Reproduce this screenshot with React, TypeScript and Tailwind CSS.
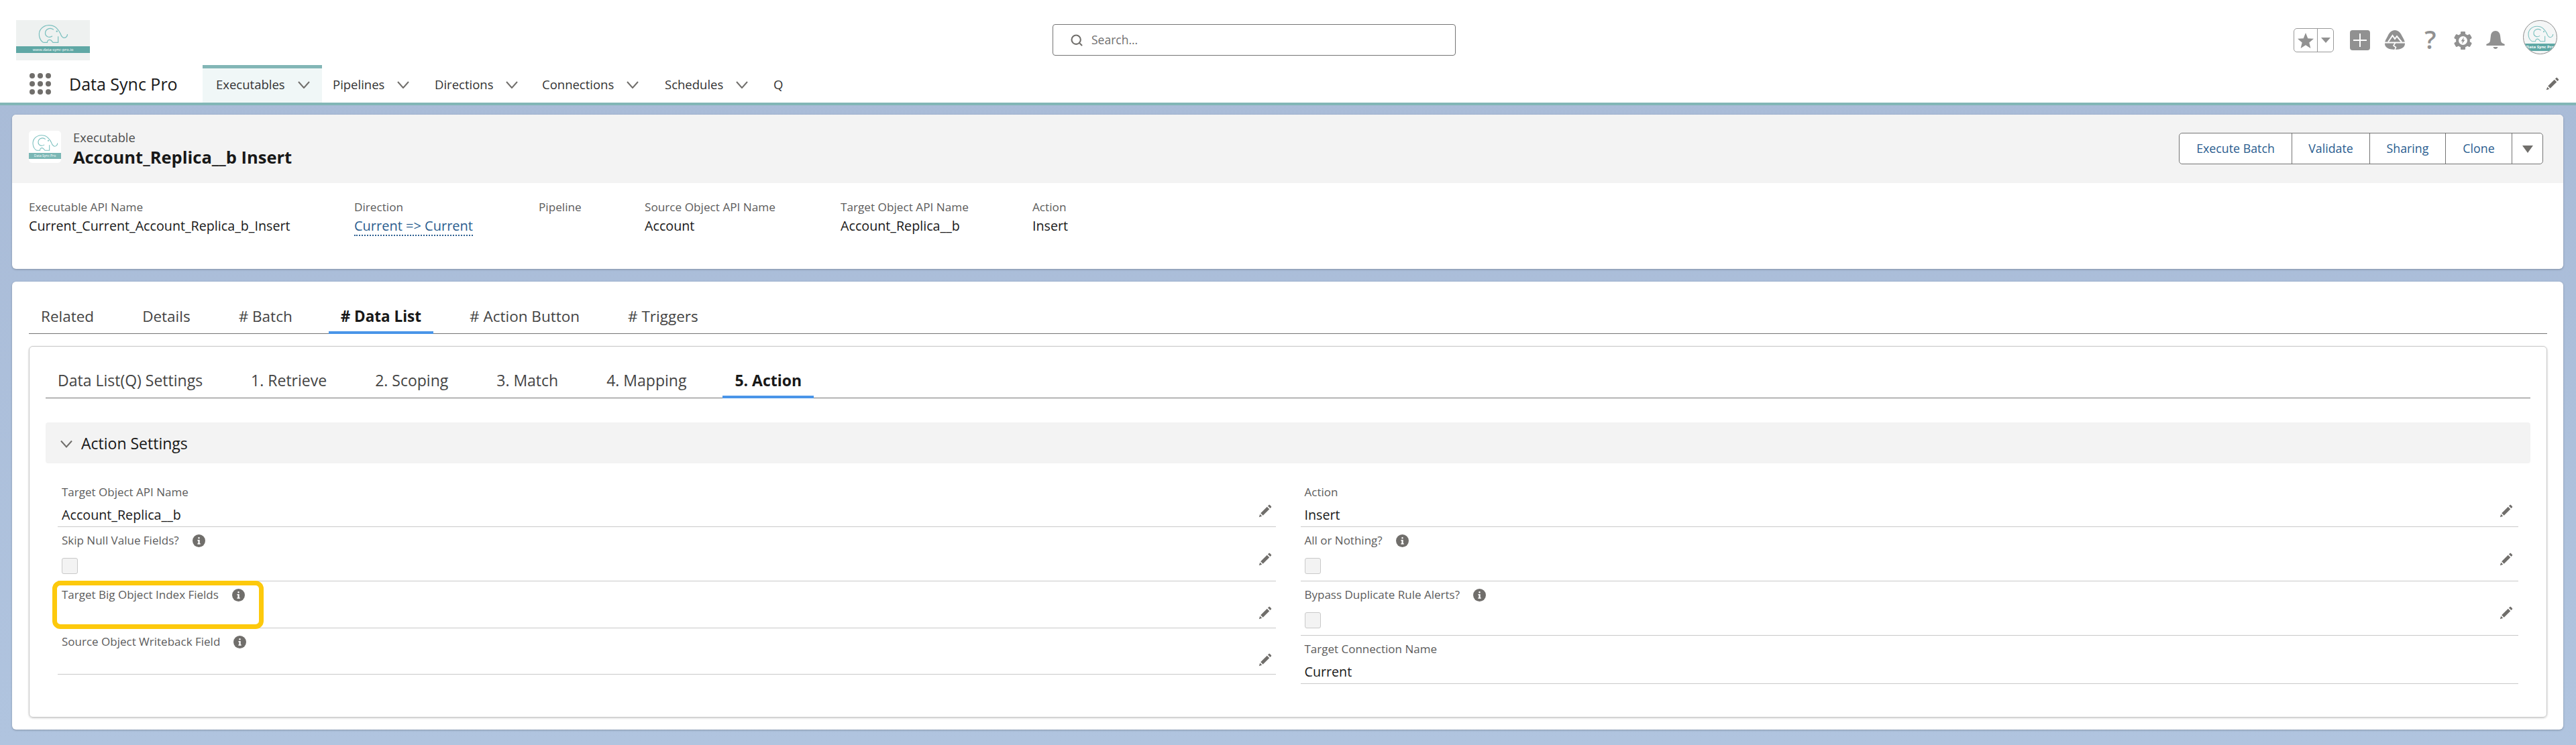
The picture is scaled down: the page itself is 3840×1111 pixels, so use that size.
import { Search } from "lucide-react";

const font = "font-['Open_Sans',_'Noto_Sans',_sans-serif]";

function Elephant({ className }: { className: string }) {
  return (
    <svg className={className} viewBox="0 0 48 30" fill="none" stroke="#7cc0bf" strokeWidth="1.3">
      <path d="M9 28.5C2 24 0 13 6 6.500C12 0 23 0 29 5.500C32 8.500 34 11 35.500 14.500C37 20 41 23 44.500 20C46 18.500 46.500 17 46.500 15.500" />
      <path d="M9 28.500L15 28.500C15 25 18 23 21 25L24 28.500L32 28.500L32 19" />
      <path d="M25 8.500C19 4 12 8 12 14C12 19 18 22 23 18.500" />
      <circle cx="30" cy="11" r="0.6" fill="#7cc0bf" />
    </svg>
  );
}

function Chevron({ className }: { className: string }) {
  return (
    <svg className={className} viewBox="0 0 18 11" fill="none" stroke="#706e6b" strokeWidth="2">
      <path d="M1 1L9 10L17 1" />
    </svg>
  );
}

function Pencil({ className }: { className: string }) {
  return (
    <svg className={className} viewBox="0 0 24 24" fill="#706e6b">
      <path d="M1 23L2.600 17.600L6.400 21.400Z" />
      <path d="M3.800 16L15.300 4.500L19.500 8.700L8 20.200Z" />
      <path d="M16.700 3.100L18.400 1.400C19 .800 19.900 .800 20.500 1.400L22.600 3.500C23.200 4.100 23.200 5 22.600 5.600L20.900 7.300Z" />
    </svg>
  );
}

function Info() {
  return (
    <svg className="w-[19px] h-[19px] shrink-0" viewBox="0 0 19 19">
      <circle cx="9.500" cy="9.500" r="9.500" fill="#706e6b" />
      <rect x="8.300" y="4" width="2.400" height="2.400" rx="1" fill="#fff" />
      <path d="M7.400 8H10.700V13.200H11.700V14.800H7.400V13.200H8.400V9.500H7.400Z" fill="#fff" />
    </svg>
  );
}

function Trailhead() {
  return (
    <svg className="w-[30px] h-[29px]" viewBox="0 0 30 29" fill="#919191">
      <path d="M15 0C20 0 23.500 4 25.500 8.500C27.500 12.500 30 15.500 30 20C30 26 24 29 15 29C6 29 0 26 0 20C0 15.500 2.500 12.500 4.500 8.500C6.500 4 10 0 15 0Z" />
      <path d="M0 18.500H30" stroke="#fff" strokeWidth="2" />
      <path d="M5 17.500L11.500 8L15 13L18 9L25 17.500" stroke="#fff" strokeWidth="2" fill="none" />
      <path d="M15.500 19L13 23L16.500 25.500L15 29" stroke="#fff" strokeWidth="1.600" fill="none" />
    </svg>
  );
}

function Gear() {
  return (
    <svg className="w-[27px] h-[27px]" viewBox="0 0 27 27" fill="#919191">
      {[0, 60, 120, 180, 240, 300].map((deg) => (
        <rect key={deg} x="10" y="0" width="7" height="27" rx="1.500" transform={`rotate(${deg} 13.500 13.500)`} />
      ))}
      <circle cx="13.500" cy="13.500" r="10.500" />
      <circle cx="13.500" cy="13.500" r="6.500" fill="#fff" />
      <path d="M15 8.500L10.500 14.500H13L12 18.500L16.500 12.500H14Z" />
    </svg>
  );
}

function Bell() {
  return (
    <svg className="w-[28px] h-[27px]" viewBox="0 0 28 27" fill="#919191">
      <path d="M14 0C18 0 20.500 3 21 7L22 15C22.300 17 24 18.500 27 19.500C28 20 28 22 27 22H1C0 22 0 20 1 19.500C4 18.500 5.700 17 6 15L7 7C7.500 3 10 0 14 0Z" />
      <path d="M10.500 24H17.500C17 26 15.500 27 14 27C12.500 27 11 26 10.500 24Z" />
    </svg>
  );
}

const navItems = [
  { label: "Executables", cls: "w-[178px] pl-[20px] bg-[#f0f7f7] border-t-[5px] border-[#82b6b6]", chevron: true },
  { label: "Pipelines", cls: "w-[152px] pl-[16px] border-t-[5px] border-transparent", chevron: true },
  { label: "Directions", cls: "w-[160px] pl-[16px] border-t-[5px] border-transparent", chevron: true },
  { label: "Connections", cls: "w-[183px] pl-[16px] border-t-[5px] border-transparent", chevron: true },
  { label: "Schedules", cls: "w-[162px] pl-[16px] border-t-[5px] border-transparent", chevron: true },
  { label: "Q", cls: "w-[50px] pl-[16px] border-t-[5px] border-transparent", chevron: false },
];

const actions = [
  { label: "Execute Batch", cls: "w-[168px]" },
  { label: "Validate", cls: "w-[116px]" },
  { label: "Sharing", cls: "w-[113px]" },
  { label: "Clone", cls: "w-[99px]" },
];

const highlights = [
  { label: "Executable API Name", value: "Current_Current_Account_Replica_b_Insert", cls: "w-[485px]" },
  { label: "Direction", value: "Current => Current", cls: "w-[275px]", link: true },
  { label: "Pipeline", value: "", cls: "w-[158px]" },
  { label: "Source Object API Name", value: "Account", cls: "w-[292px]" },
  { label: "Target Object API Name", value: "Account_Replica__b", cls: "w-[286px]" },
  { label: "Action", value: "Insert", cls: "w-[120px]" },
];

const outerTabs = ["Related", "Details", "# Batch", "# Data List", "# Action Button", "# Triggers"];
const innerTabs = ["Data List(Q) Settings", "1. Retrieve", "2. Scoping", "3. Match", "4. Mapping", "5. Action"];

function Tabs({ tabs, active, className, tabClass }: { tabs: string[]; active: string; className: string; tabClass: string }) {
  return (
    <div className={`flex gap-[36px] border-b border-[#747474] ${className}`}>
      {tabs.map((tab) => (
        <div
          key={tab}
          className={`px-[18px] flex items-center -mb-px ${tabClass} ${
            tab === active
              ? "font-bold text-[#181818] border-b-[4px] border-[#4a95e8]"
              : "text-[#444444] border-b-[4px] border-transparent"
          }`}
        >
          {tab}
        </div>
      ))}
    </div>
  );
}

interface FieldProps {
  label: string;
  info?: boolean;
  value?: string;
  checkbox?: boolean;
  height?: string;
  pencil?: string;
  highlighted?: boolean;
}

function Field({ label, info, value, checkbox, height, pencil, highlighted }: FieldProps) {
  return (
    <div className={`relative flex justify-between items-end border-b border-[#c9c9c9] pl-[6px] pr-[6px] ${height ?? ""}`}>
      <div className="pt-[8px] self-start">
        <div className="h-[24px] flex items-center gap-[20px] text-[17px] text-[#5c5c5c]">
          {label}
          {info && <Info />}
        </div>
        {value && <div className="mt-[4px] h-[35px] leading-[36px] text-[19.700px] text-[#181818]">{value}</div>}
        {checkbox && <div className="mt-[14px] mb-[10px] w-[24px] h-[24px] rounded-[3px] bg-[#f3f3f3] border border-[#c9c9c9]" />}
      </div>
      {pencil && <Pencil className={`w-[20px] h-[20px] ${pencil}`} />}
      {highlighted && (
        <div className="absolute left-[-8px] top-[-1px] w-[315px] h-[72px] border-[7px] border-[#fdc90c] rounded-[12px]" />
      )}
    </div>
  );
}

export default function App() {
  return (
    <div className={`h-[1111px] overflow-hidden flex flex-col bg-gradient-to-b from-[#a8bad6] to-[#b0c4df] ${font}`}>
      <header className="bg-white">
        <div className="h-[97px] flex items-start">
          <div className="w-[1569px] pl-[24px] pt-[30px] shrink-0">
            <div className="w-[110px] h-[60px] bg-[#eef1f0] flex flex-col items-center pt-[6px]">
              <Elephant className="w-[46px] h-[29px]" />
              <div className="mt-[4px] w-full h-[10px] bg-[#5fa8a5] text-white text-[6px] leading-[10px] text-center">
                www.data-sync-pro.io
              </div>
            </div>
          </div>
          <div className="mt-[36px] w-[601px] h-[47px] shrink-0 border border-[#747474] rounded-[4px] flex items-center pl-[25px] gap-[12px] text-[17.500px] text-[#6f6f6f]">
            <Search className="w-[20px] h-[20px] text-[#706e6b]" strokeWidth={2.500} />
            Search...
          </div>
          <div className="flex-1 flex justify-end items-start pr-[28px] pt-[30px]">
            <div className="mt-[12px] w-[60px] h-[36px] border border-[#999999] rounded-[5px] flex">
              <div className="w-[35px] flex items-center justify-center border-r border-[#999999]">
                <svg className="w-[24px] h-[23px]" viewBox="0 0 24 23" fill="#919191">
                  <path d="M12 0L15.300 8.300L24 8.800L17.300 14.400L19.400 23L12 18.300L4.600 23L6.700 14.400L0 8.800L8.700 8.300Z" />
                </svg>
              </div>
              <div className="flex-1 flex items-center justify-center">
                <div className="w-0 h-0 border-x-[7px] border-x-transparent border-t-[8px] border-t-[#919191]" />
              </div>
            </div>
            <div className="ml-[24px] mt-[15px] w-[30px] h-[30px] rounded-[4px] bg-[#919191] flex items-center justify-center">
              <svg className="w-[22px] h-[22px]" viewBox="0 0 22 22" stroke="#fff" strokeWidth="2">
                <path d="M11 1V21M1 11H21" />
              </svg>
            </div>
            <div className="ml-[22px] mt-[15px]">
              <Trailhead />
            </div>
            <div className="ml-[26px] mt-[11px] w-[24px] h-[34px] flex items-center justify-center text-[38px] leading-[34px] font-semibold text-[#919191]">
              ?
            </div>
            <div className="ml-[23px] mt-[17px]">
              <Gear />
            </div>
            <div className="ml-[21px] mt-[16px]">
              <Bell />
            </div>
            <div className="ml-[27px] w-[51px] h-[51px] rounded-full border border-[#8c8c8c] bg-[#f4f6f6] overflow-hidden flex flex-col items-center pt-[7px]">
              <Elephant className="w-[40px] h-[25px]" />
              <div className="mt-[2px] w-full h-[11px] bg-[#5fa8a5] text-white text-[6px] leading-[11px] font-bold text-center whitespace-nowrap">
                Data Sync Pro
              </div>
            </div>
          </div>
        </div>
        <div className="h-[60px] flex items-stretch border-b-[4px] border-[#82b6b6]">
          <div className="w-[302px] pl-[44px] flex items-center gap-[27px] shrink-0">
            <div className="grid grid-cols-3 gap-[4px] w-[32px]">
              {Array.from({ length: 9 }).map((_, i) => (
                <div key={i} className="w-[8px] h-[8px] rounded-full bg-[#706e6b]" />
              ))}
            </div>
            <span className="pt-[2px] text-[25px] text-[#181818] whitespace-nowrap">Data Sync Pro</span>
          </div>
          {navItems.map((item) => (
            <div key={item.label} className={`flex items-center gap-[19px] pb-[3px] text-[18.500px] text-[#333333] ${item.cls}`}>
              {item.label}
              {item.chevron && <Chevron className="w-[18px] h-[11px]" />}
            </div>
          ))}
          <div className="flex-1 flex items-center justify-end pr-[25px]">
            <Pencil className="w-[20px] h-[20px]" />
          </div>
        </div>
      </header>

      <main className="flex-1 pl-[18px] pr-[19px] pt-[14px]">
        <section className="h-[230px] bg-white rounded-[6px] shadow-[0_1px_3px_rgba(0,0,0,0.25)] overflow-hidden">
          <div className="h-[102px] bg-[#f3f3f3] flex justify-between items-start pl-[25px] pr-[30px] pt-[24px]">
            <div className="flex gap-[18px]">
              <div className="w-[48px] h-[48px] bg-white rounded-[5px] overflow-hidden flex flex-col items-center pt-[5px]">
                <Elephant className="w-[40px] h-[26px]" />
                <div className="mt-[2px] w-full h-[9px] bg-[#7ab7b5] text-white text-[5px] leading-[9px] text-center">
                  Data Sync Pro
                </div>
              </div>
              <div>
                <div className="text-[18.300px] leading-[20px] text-[#4d4d4d]">Executable</div>
                <div className="mt-[2px] text-[25.500px] leading-[34px] font-bold text-[#181818]">
                  Account_Replica__b Insert
                </div>
              </div>
            </div>
            <div className="mt-[3px] h-[47px] flex bg-white border border-[#747474] rounded-[5px] text-[17.800px] text-[#2a5d8f]">
              {actions.map((action) => (
                <div key={action.label} className={`flex items-center justify-center border-r border-[#747474] ${action.cls}`}>
                  {action.label}
                </div>
              ))}
              <div className="w-[45px] flex items-center justify-center">
                <div className="w-0 h-0 border-x-[8px] border-x-transparent border-t-[11px] border-t-[#706e6b] mt-[2px]" />
              </div>
            </div>
          </div>
          <div className="flex pl-[25px] pt-[24px]">
            {highlights.map((item) => (
              <div key={item.label} className={item.cls}>
                <div className="text-[17.200px] leading-[24px] text-[#5c5c5c]">{item.label}</div>
                <div className="mt-[1px] h-[30px]">
                  {item.link ? (
                    <span className="text-[20px] leading-[30px] text-[#2a5d8f] border-b-2 border-dotted border-[#2a5d8f]">
                      {item.value}
                    </span>
                  ) : (
                    <span className="text-[19.700px] leading-[30px] text-[#181818]">{item.value}</span>
                  )}
                </div>
              </div>
            ))}
          </div>
        </section>

        <section className="mt-[19px] h-[668px] bg-white rounded-[6px] shadow-[0_1px_3px_rgba(0,0,0,0.25)] pl-[25px] pr-[24px] pt-[30px]">
          <Tabs tabs={outerTabs} active="# Data List" className="h-[48px]" tabClass="text-[22.500px]" />
          <div className="mt-[18px] h-[554px] border border-[#c9c9c9] rounded-[6px] shadow-[0_1px_3px_rgba(0,0,0,0.2)] pl-[24px] pr-[24px] pt-[30px]">
            <Tabs tabs={innerTabs} active="5. Action" className="h-[47px]" tabClass="text-[23px] pb-[3px]" />
            <div className="mt-[36px] h-[61px] pt-[2px] bg-[#f3f3f3] rounded-[4px] flex items-center pl-[22px] gap-[13px] text-[23px] text-[#181818]">
              <Chevron className="w-[18px] h-[12px]" />
              Action Settings
            </div>
            <div className="mt-[23px] grid grid-cols-2 gap-x-[37px] px-[18px] items-start">
              <div>
                <Field label="Target Object API Name" value="Account_Replica__b" pencil="mb-[13px]" />
                <Field label="Skip Null Value Fields?" info checkbox pencil="mb-[22px]" />
                <Field label="Target Big Object Index Fields" info height="h-[70px]" pencil="mb-[12px]" highlighted />
                <Field label="Source Object Writeback Field" info height="h-[69px]" pencil="mb-[11px]" />
              </div>
              <div>
                <Field label="Action" value="Insert" pencil="mb-[13px] mr-[2px]" />
                <Field label="All or Nothing?" info checkbox pencil="mb-[22px] mr-[2px]" />
                <Field label="Bypass Duplicate Rule Alerts?" info checkbox pencil="mb-[23px] mr-[2px]" />
                <Field label="Target Connection Name" value="Current" />
              </div>
            </div>
          </div>
        </section>
      </main>
    </div>
  );
}
